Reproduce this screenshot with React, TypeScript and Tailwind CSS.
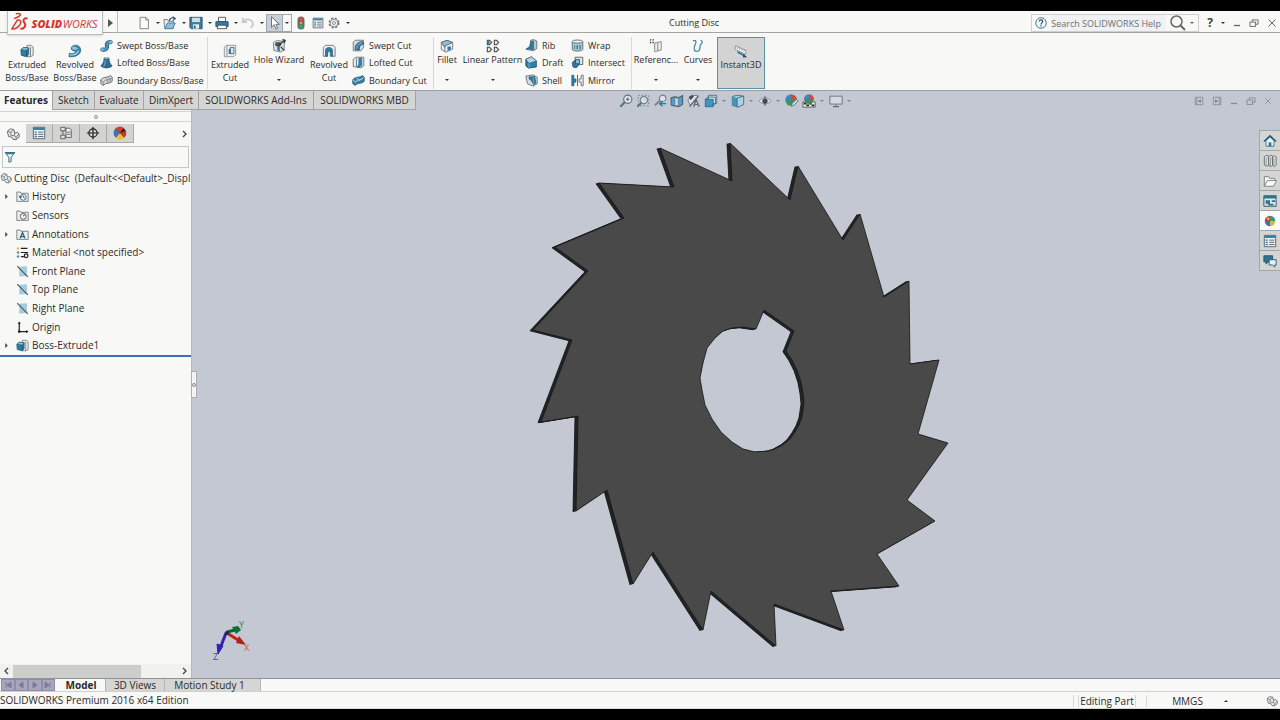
import { useState, type ReactNode } from "react";

const INK = "#454a4e";
const BLUE = "#2e7ea6";
const SKY = "#8cc0da";
const NAVY = "#1d4f6c";
const GREY = "#d9dcde";

/* All glyphs are drawn on a 16 x 16 grid. */
const ICONS: Record<string, ReactNode> = {
  newDoc: <path d="M3.5 1.5h6.500l3 3v10h-9.500zM10 1.500v3h3" fill="#fcfcfc" stroke="#777" />,
  open: (
    <>
      <path d="M1 4h4l1 2h6v8H2z" fill="#eee" stroke="#777" />
      <path d="M2 14.500 5 8h9l-3 6.500z" fill={SKY} stroke={BLUE} />
      <path d="M7 6c1-4 4-4.500 6-3.500M11 .8l3 2-3 2.500" fill="none" stroke={NAVY} strokeWidth="1.300" />
    </>
  ),
  save: (
    <>
      <path d="M1 1.500h14v13H2.500L1 13z" fill="#3d7d9c" stroke="#28536a" />
      <path d="M3.500 2h9v5h-9z" fill="#cfdfe7" />
      <path d="M4.500 9.500h7v5h-7z" fill="#e8eef0" />
      <path d="M5.500 11h2v3h-2z" fill="#28536a" />
    </>
  ),
  print: (
    <>
      <path d="M4 1.500h8v5H4z" fill="#fff" stroke={INK} />
      <path d="M1 6.500h14v5.500H1z" fill="#377b9d" stroke={NAVY} />
      <path d="M3.500 10.500h9l1 4h-11z" fill="#fff" stroke={INK} />
    </>
  ),
  undo: <path d="M2 2v5h5M2.500 6.500C5 3.500 9 3 12 5.500s2 6-1 8" fill="none" stroke="#c6c9ca" strokeWidth="2" />,
  cursor: <path d="M4 1v12l3-3 2 5 2-1-2-4.500h4z" fill="#fff" stroke="#59626a" />,
  traffic: (
    <>
      <rect x="4" y="0.500" width="8" height="15" rx="4" fill="#66696a" />
      <circle cx="8" cy="4" r="2.300" fill="#e8483c" />
      <circle cx="8" cy="8" r="1.500" fill="#c9b04a" />
      <circle cx="8" cy="12" r="2.300" fill="#2fae5a" />
    </>
  ),
  list: (
    <>
      <path d="M1.500 1.500h13v13h-13z" fill="#f2f4f4" stroke="#465b67" />
      <path d="M2 2h12v2.500H2z" fill={BLUE} />
      <path d="M3 7h2.500M3 9.500h2.500M3 12h2.500" stroke={BLUE} strokeWidth="1.500" />
      <path d="M7 7h6M7 9.500h6M7 12h6" stroke="#555" />
    </>
  ),
  gear: (
    <>
      <circle cx="8" cy="8" r="6.300" fill="none" stroke="#6b6f72" strokeWidth="2" strokeDasharray="3 2" />
      <circle cx="8" cy="8" r="5" fill="#f7f7f6" stroke="#6b6f72" />
      <circle cx="8" cy="8" r="2" fill="none" stroke="#6b6f72" />
    </>
  ),
  boss: (
    <>
      <path d="M8 1.500h4.500l2.500 2v9.500l-3 1.500H8z" fill="#eef0f1" stroke="#73797d" />
      <path d="M12 3.500v11" stroke="#73797d" />
      <path d="M1 6.500 4 4l6 .5v7.500L7.500 14.500 1.500 13z" fill={BLUE} stroke={NAVY} strokeWidth=".8" />
      <path d="M1 6.500 4 4l6 .5-2.500 3z" fill={SKY} stroke={NAVY} strokeWidth=".6" />
      <path d="M7.500 7.500v7" stroke={NAVY} />
    </>
  ),
  revolve: (
    <>
      <path d="M3.500 4.500C5 0 13.500 0 14.500 6c.7 6-6 9.500-13.500 8.500l.5-4c4 .8 7 0 7-1.500C8.500 7.500 3 8 3.500 4.500z" fill="#3987ae" stroke={NAVY} strokeWidth=".7" />
      <path d="M4 4.500c2-3 6-1.500 7.500 1C9.500 7.500 5 7 4 4.500z" fill={SKY} />
      <path d="M2 12.500c5 .5 9-1.500 10-5" fill="none" stroke="#b7dcec" strokeWidth="1.300" />
    </>
  ),
  sweep: (
    <>
      <path d="M3 13c5 1 6-2 5.500-5S10 3.500 13 4" fill="none" stroke={NAVY} strokeWidth="5" strokeLinecap="round" />
      <path d="M3 13c5 1 6-2 5.500-5S10 3.500 13 4" fill="none" stroke="#4594bb" strokeWidth="3.500" strokeLinecap="round" />
      <circle cx="13" cy="4" r="1.500" fill={SKY} />
      <circle cx="3" cy="13" r="1.500" fill={SKY} />
    </>
  ),
  loft: (
    <>
      <path d="M5 2.500h6c0 5 1 7 4 9.500-3 3.500-11 3.500-14 0 3-2.500 4-4.500 4-9.500z" fill="#2b6c92" stroke={NAVY} />
      <ellipse cx="8" cy="2.500" rx="3" ry="1.300" fill={SKY} />
      <path d="M6.500 5c0 4-.5 6-2 8" stroke={SKY} fill="none" />
    </>
  ),
  boundary: (
    <>
      <path d="M1 7c3-4 8-2 12-5l2 2v5c-4 4-8 1-11 5l-3-2z" fill={GREY} stroke="#555b5f" />
      <path d="M1 7.500 4 10c3-4 7-1.500 11-5.500M4 10v4M6.500 4.500l3 3.500v4M10 3.500l2.500 3v4" fill="none" stroke="#777c80" />
    </>
  ),
  cut: (
    <>
      <path d="M1.500 3.500 4 1.500h10.500v11L12 14.500H1.500z" fill="#eceeef" stroke="#8a8f93" />
      <path d="M4.500 2v12" stroke="#8a8f93" />
      <path d="M6.500 5.500h3v6h-3z" fill={BLUE} />
      <path d="M8.500 4h4v7h-4z" fill="#d5e7ef" stroke="#486979" />
    </>
  ),
  wizard: (
    <>
      <path d="M1.500 4 6 1.500 14 3v9.500L9.500 15 2 13z" fill={GREY} stroke="#7a8084" />
      <ellipse cx="7" cy="6" rx="3.500" ry="2.500" fill="#4f5659" />
      <path d="M6 8v5l3 1V8z" fill={BLUE} />
      <path d="m7 8 7-6.500M12 .5l3 1-1 3M10 9l4 4" stroke="#353b3f" strokeWidth="1.500" fill="none" />
    </>
  ),
  revCut: (
    <>
      <path d="M1.500 14V4L4 1.500h9L15 4v10h-4V9H6v5z" fill="#eceeef" stroke="#6d7478" />
      <path d="M4 14V7c0-4 8-4 8 0v7h-2.500V8h-3v6z" fill={BLUE} stroke={NAVY} strokeWidth=".7" />
    </>
  ),
  sweepCut: (
    <>
      <path d="M1.500 4 4 1.500h10v9L11 14.500H1.500z" fill={GREY} stroke="#5e666b" />
      <path d="M4 13C3.500 8 6 4 13 3l1.500 3C10 7 9 9 9 13.500z" fill={BLUE} stroke={NAVY} />
      <path d="M6 12c0-4 2-6.500 7-7.500" stroke={SKY} fill="none" strokeWidth="1.200" />
    </>
  ),
  loftCut: (
    <>
      <path d="M1.500 4 5 1.500h9.500V12L11 14.500 1.500 13z" fill="#e7eaeb" stroke="#5e666b" />
      <path d="M8 2h4v9.500l-3 3H5.500L8 10z" fill={BLUE} />
      <path d="M5.500 3v10M12 2v11" stroke="#596a73" />
    </>
  ),
  boundaryCut: (
    <>
      <path d="M1 7c3-4 8-2 12-5l2 2v5c-4 4-8 1-11 5l-3-2z" fill="#3a83aa" stroke={NAVY} />
      <path d="M1.500 7.500 4 10c3-4 7-1.500 10.500-5.500M6 5l3 3" fill="none" stroke="#b9dceb" strokeWidth="1.200" />
    </>
  ),
  fillet: (
    <>
      <path d="M1.500 4 8 1.500 14.500 4v7.500L7 15 1.500 12z" fill="#edf0f1" stroke="#6c7478" />
      <path d="M1.500 4 8 1.500 14.500 4 9 6.500c-2 0-3 1.500-3.500 3z" fill={SKY} stroke="#56646c" />
      <path d="M8.500 8.500h4V12l-4 1.500z" fill={BLUE} />
      <path d="M5.500 7v7.500" stroke="#6c7478" />
    </>
  ),
  pattern: (
    <>
      <path
        d="M1.500 1.500H4L6.500 4 4 6.500H1.500zM9.500 1.500H12L14.500 4 12 6.500H9.500zM1.500 9.500H4L6.500 12 4 14.500H1.500zM9.500 9.500H12l2.500 2.500-2.500 2.500H9.500z"
        fill="#e5e8e9"
        stroke="#41474b"
        strokeWidth="1.200"
      />
      <path d="M2 2h2v4H2z" fill={BLUE} />
    </>
  ),
  rib: (
    <>
      <path d="M7 1.500 11 .8l3.500 1.700V12L10 14.500l-9-2L6 10z" fill="#bfc8cd" stroke="#59666e" />
      <path d="M2 12c4-2 5-5 5.500-9l3-.5V13z" fill={BLUE} stroke={NAVY} strokeWidth=".7" />
    </>
  ),
  draft: (
    <>
      <path d="M1 4 8 1l6 5v7.500L4 15 1 12z" fill={BLUE} stroke={NAVY} />
      <path d="m1 4 7-3 6 5-9 3z" fill="#b6d5e3" stroke={NAVY} strokeWidth=".6" />
      <path d="M5 9v6" stroke={SKY} />
    </>
  ),
  shell: (
    <>
      <path d="M1 2.500 10 1l5 3v8l-5 3-7-3z" fill={GREY} stroke="#59666e" />
      <path d="m5 3.500 7-.5 1.500 8-3 2.500C9 10 8 7 5 6z" fill={BLUE} stroke={NAVY} strokeWidth=".7" />
      <path d="M10.500 4v9" stroke="#5caed2" />
    </>
  ),
  wrap: (
    <>
      <path d="M1.500 3v10c2 2.500 11 2.500 13 0V3z" fill="#b8c9d1" stroke="#4e5c64" />
      <ellipse cx="8" cy="3.200" rx="6.500" ry="2" fill="#edf1f2" stroke="#4e5c64" />
      <path d="M4 7.500h8v5H4z" fill={BLUE} />
      <path d="M6 7.500v5M9.500 7.500v5" stroke="#fff" />
    </>
  ),
  intersect: (
    <>
      <path d="M5 1.500h9.500v9H5z" fill="#dfe6e9" stroke="#48565e" />
      <path d="m1.500 8 4-3h4v6l-3 3.500-4-1z" fill={BLUE} stroke={NAVY} />
      <path d="M5.500 4.500h5v5h-5z" fill={SKY} stroke={NAVY} />
    </>
  ),
  mirror: (
    <>
      <path d="M1 1.500h2.500V6H6v4H3.500v4.500H1z" fill={BLUE} stroke={NAVY} strokeWidth=".8" />
      <path d="M15 1.500h-2.500V6H10v4h2.500v4.500H15z" fill="#f0f0f0" stroke="#59626a" />
      <path d="M8 1v14" stroke="#444" />
    </>
  ),
  refGeom: (
    <>
      <path d="M6.500 4.500 14 3v9.500l-7.500 2zM10 4v9.500" fill="#eceeef" stroke="#7b8185" />
      <path d="M1 1h1.500M4 1h1.500M1 4h1.500M4 4h1.500" stroke="#333" strokeWidth="1.500" />
    </>
  ),
  curves: <path d="M2 2c5-1 4 2 2.500 5S3 15 7.500 14 9 9 11 6.500 14 3 11 1.500" fill="none" stroke="#3e87a9" strokeWidth="1.400" />,
  instant: (
    <>
      <path d="m2 2 12 5.500-1 4L1 6z" fill="#fafafa" stroke="#8c9194" />
      <path d="m4.500 3.500-.7 2M7 4.500l-.7 2M9.500 5.500l-.7 2M12 6.700l-.7 2" stroke="#777" />
      <path d="m4 9 8 4.500" stroke={BLUE} strokeWidth="2" />
      <path d="m11 11.500 4 3.500-5 .5z" fill={NAVY} />
    </>
  ),
  zoomFit: (
    <>
      <circle cx="10" cy="6" r="4.700" fill="#dfe3ea" stroke="#63717b" strokeWidth="1.300" />
      <path d="m6.500 9.500-5 5" stroke="#4b7790" strokeWidth="2.500" />
      <path d="M8 6h4M10 4v4" stroke="#555" />
    </>
  ),
  zoomArea: (
    <>
      <path d="M2.500 1.500h12v12h-12z" fill="none" stroke="#777e86" strokeDasharray="2 2" />
      <circle cx="9" cy="7" r="4.200" fill="#d6dde6" stroke="#6c7983" strokeWidth="1.200" />
      <path d="m6 10-4.500 4.500" stroke="#4b7790" strokeWidth="2.300" />
    </>
  ),
  prevView: (
    <>
      <circle cx="11" cy="5" r="3.700" fill="#dfe3ea" stroke="#77818a" strokeWidth="1.300" />
      <path d="m8 7.500-6 5.500" stroke="#7d868d" strokeWidth="2.300" />
      <path d="M15 11H8m3-3-3.500 3 3.500 3" stroke={BLUE} fill="none" strokeWidth="1.600" />
    </>
  ),
  section: (
    <>
      <path d="M1 4.500 5 3l5 1 4.500-2.500V12L10 14.500 1.500 13z" fill="#6e8796" stroke="#3e515c" />
      <path d="M2 5.500h3v7H2zM10 5l3.500-1.500v8L10 13.500z" fill="#4ca0c9" />
      <path d="M6 5h3v8H6z" fill="#cad5dc" />
    </>
  ),
  annView: (
    <>
      <path d="M1 7 6 1.500 13 2 3.500 13z" fill="#e1e5e9" stroke="#6c7780" />
      <path d="m2 3 4-2 2 2-4 4z" fill="#454d54" />
      <path d="m3 14.500 10-12M7.500 14.500l3-8 3.500 8M8.500 12h5" fill="none" stroke="#5b6670" strokeWidth="1.400" />
    </>
  ),
  orient: (
    <>
      <path d="M5 1.500h9.500V11H5z" fill="#e2e8ed" stroke="#4b6b7e" />
      <path d="M1.500 6h9v8.500h-9z" fill="#3f95c2" stroke="#2a6788" />
      <path d="M1.500 6 5 3.500h8V11l-2.500 2" fill="none" stroke="#2a6788" />
    </>
  ),
  display: (
    <>
      <path d="m1.500 3 5-1.500 8 1V12L8 15l-6.500-2z" fill="#a9d2e6" stroke="#40687d" />
      <path d="M1.500 3 7 4.500V15l-5.500-2z" fill="#4794ba" />
      <path d="m7 4.500 7.500-2M7 4.500V15" stroke="#40687d" />
    </>
  ),
  eye: (
    <>
      <path d="M1 8c4-5 10-5 14 0-4 4.500-10 4.500-14 0z" fill="#d8dce2" stroke="#8a9096" />
      <circle cx="8" cy="8" r="3" fill="#45494e" />
      <path d="M8 2.500v11" stroke="#45494e" />
    </>
  ),
  ball: (
    <>
      <path d="M8 8V1a7 7 0 0 1 7 7z" fill="#3a9c52" />
      <path d="M8 8h7a7 7 0 0 1-7 7z" fill="#e3b23b" />
      <path d="M8 8v7a7 7 0 0 1-7-7z" fill="#2b76bd" />
      <path d="M8 8H1a7 7 0 0 1 7-7z" fill="#d63c30" />
      <circle cx="5.500" cy="5" r="1.700" fill="#fff" opacity=".6" />
    </>
  ),
  ballDark: (
    <>
      <circle cx="8" cy="8" r="7" fill="#222" />
      <path d="M8 8 2.500 3A7 7 0 0 1 12 2.200z" fill="#d63c30" />
      <path d="M8 8 2.500 3a7 7 0 0 0 .5 10z" fill="#3577bb" />
      <path d="m8 8-5 5a7 7 0 0 0 10 0z" fill="#e6bd35" />
      <path d="m8 8 5 5a7 7 0 0 0 1.500-7.500z" fill="#c0392b" />
    </>
  ),
  ballEdit: (
    <>
      <circle cx="7" cy="7" r="6.500" fill="#3a9460" />
      <path d="M7 7V.5A6.500 6.500 0 0 0 .5 7z" fill="#4384c1" />
      <path d="M7 7V.5A6.500 6.500 0 0 1 13.500 7z" fill="#d8473c" />
      <path d="m7 14 1-3 5-5 2 2-5 5z" fill="#cfe0e8" stroke="#4d7184" />
    </>
  ),
  scene: (
    <>
      <path d="M1 9h14v6H1z" fill="#eee" stroke="#555" />
      <path d="M2 10h3v2H2zM8 10h3v2H8zM5 12h3v2H5zM11 12h3v2h-3z" fill="#222" />
      <circle cx="8" cy="6" r="5.500" fill="#39905a" />
      <path d="M8 6V.5A5.500 5.500 0 0 0 2.500 6z" fill="#3f85c8" />
      <path d="M8 6V.5A5.500 5.500 0 0 1 13.500 6z" fill="#d8473c" />
    </>
  ),
  monitor: (
    <>
      <path d="M1 2.500h14v9H1z" fill="#d5dae1" stroke="#666c73" />
      <path d="M8 12v2.500M4.500 14.500h7" stroke="#666c73" strokeWidth="1.300" />
    </>
  ),
  part: (
    <>
      <path d="M1.500 5 5 2l4 1 1 4 3-1 2 2v3.500L11 14.500 8 14l-1.500-2.500L3 11z" fill="#e8eaea" stroke="#565c60" />
      <path d="m1.500 5 4 1L9 3M5.500 6v3.500l4 .5.500-3M9.500 10l2 1.500L15 8M11.500 11.500v3" fill="none" stroke="#6d7377" />
    </>
  ),
  config: (
    <>
      <path d="M2 1.500h5v4H2zM2 10.500h5v4H2zM4.500 5.500v5M7 12.500h2" fill="#e3e5e6" stroke="#555" />
      <path d="M8 2.500h4l2 2v8.500H8z" fill="#f1f2f2" stroke="#555" />
      <path d="M9 7h4M9 9.500h4" stroke="#555" />
    </>
  ),
  target: (
    <>
      <circle cx="8" cy="8" r="4.700" fill="none" stroke="#222" strokeWidth="1.400" />
      <path d="M8 1v14M1 8h14" stroke="#222" strokeWidth="1.400" />
    </>
  ),
  filter: (
    <>
      <path d="M1.500 2h13L9.500 8.500V14L6.500 15V8.500z" fill="#f3f7f8" stroke="#3b6577" strokeWidth="1.300" />
      <path d="M2 2h12l-1.500 2.200h-9z" fill="#327a9c" />
    </>
  ),
  history: (
    <>
      <path d="M1 2.500h4l1 1.500h9v10H1z" fill="#eceeee" stroke="#6a6f72" />
      <circle cx="9" cy="9" r="3.600" fill="#fff" stroke="#397692" strokeWidth="1.200" />
      <path d="M9 7v2l2 1M3.500 7l2 3 1.500-3" fill="none" stroke="#333" />
    </>
  ),
  sensors: (
    <>
      <path d="M1 2.500h4l1 1.500h9v10H1z" fill="#eceeee" stroke="#6a6f72" />
      <circle cx="9" cy="9" r="3.600" fill="#fff" stroke="#555" strokeWidth="1.200" />
      <path d="m9 9 1.500-2" stroke="#c3393b" strokeWidth="1.500" />
    </>
  ),
  annotations: (
    <>
      <path d="M1 2.500h4l1 1.500h9v10H1z" fill="#eceeee" stroke="#6a6f72" />
      <path d="M5 12.500 8 5.500l3 7M6 10.500h4" fill="none" stroke="#1f6079" strokeWidth="1.500" />
    </>
  ),
  material: (
    <>
      <circle cx="2.500" cy="3" r="1.500" fill="#e0c243" />
      <circle cx="2.500" cy="8" r="1.500" fill="#4b9a8a" />
      <circle cx="2.500" cy="13" r="1.500" fill="#4f8db0" />
      <path d="M6 3h8M6 8h9M6 13h5" stroke="#222" strokeWidth="1.500" />
      <circle cx="12.500" cy="12" r="2.200" fill="#f7f7f6" stroke="#222" strokeWidth="1.500" />
    </>
  ),
  plane: (
    <>
      <path d="m4 2 9.500-.5v12L4 14z" fill="#a8cbdc" />
      <path d="m1.500 1.500 13 13" stroke="#41545f" strokeWidth="1.300" />
    </>
  ),
  origin: (
    <>
      <path d="M4 2v11h10" fill="none" stroke="#222" strokeWidth="1.500" />
      <path d="m4 .5-2 3h4zM15.500 13l-3-2v4z" fill="#222" />
      <circle cx="4" cy="13" r="1.700" fill="#222" />
    </>
  ),
  home: (
    <>
      <path d="M3.500 7.500V14h9V7.500L8 3.500z" fill="#e9f1f4" stroke="#38718c" />
      <path d="M1 8.500 8 2l7 6.500" fill="none" stroke="#245a75" strokeWidth="1.600" />
      <path d="M6.500 9.500h3V14h-3z" fill="#2f7595" />
    </>
  ),
  library: (
    <>
      <path
        d="m1.500 3 3-1.500 2 1v10l-2 1.500-3-1.500zM6 3l3-1.500 2 1v10L9 14.500 6.500 13zM10.500 3.500l2.500-1.500 2 1v9.500L13 14.500 11 13z"
        fill="#e4e5e5"
        stroke="#64696c"
      />
      <path d="M3.500 4v9M8.500 4v10M12.500 4.500v9" stroke="#8c9194" />
    </>
  ),
  folder: (
    <>
      <path d="M1.500 14V3h5l1 2h6v3" fill="#f4f4f3" stroke="#73787b" />
      <path d="M1.500 14 5 7.500h10.500L12 14z" fill="#fbfbfa" stroke="#73787b" />
    </>
  ),
  palette: (
    <>
      <path d="M1 2h14v12H1z" fill="#dbe8ee" stroke="#254d61" />
      <path d="M1 2h14v3H1zM3 7h5v4H3zM10 7h4v2h-4zM6 11h6v2H6z" fill="#33708e" />
    </>
  ),
  forum: (
    <>
      <path d="M1 2h10v7H6l-2.500 2.500V9H1z" fill="#2d7596" stroke="#20556e" />
      <path d="M7 6.500h8v6h-1.500V15L11 12.500H7z" fill="#e5f0f4" stroke="#20556e" />
    </>
  ),
  paneLeft: (
    <>
      <path d="M2 2h12v12H2zM4.500 2v12" fill="none" stroke="#858b95" strokeWidth="1.400" />
      <path d="M11 5v6L6.500 8z" fill="#70767f" />
    </>
  ),
  paneRight: (
    <>
      <path d="M2 2h12v12H2zM11.500 2v12" fill="none" stroke="#858b95" strokeWidth="1.400" />
      <path d="M5 5v6l4.500-3z" fill="#70767f" />
    </>
  ),
  minimize: <path d="M2 13h12" stroke="currentColor" strokeWidth="2.600" />,
  restore: <path d="M1.500 6.500h9v7h-9zM5 6V3h9.500v7H11" fill="none" stroke="currentColor" strokeWidth="1.500" />,
  close: <path d="m2.500 2.500 11 11M13.500 2.500l-11 11" stroke="currentColor" strokeWidth="1.600" />,
  search: (
    <>
      <circle cx="6.500" cy="6.500" r="5.500" fill="none" stroke="#666" strokeWidth="1.500" />
      <path d="m10.500 10.500 4.500 4.500" stroke="#666" strokeWidth="2" />
    </>
  ),
  help: (
    <>
      <circle cx="8" cy="8" r="7" fill="#f5f9fa" stroke="#497487" strokeWidth="1.300" />
      <path d="M5.700 6c.3-3 4.800-2.500 4.500.2C10 8 8 7.800 8 10M8 11v1.800" fill="none" stroke="#255a72" strokeWidth="1.700" />
    </>
  ),
};

function Icon({ name, className = "size-3.5" }: { name: string; className?: string }) {
  return (
    <svg viewBox="0 0 16 16" fill="none" aria-hidden="true" className={`shrink-0 ${className}`}>
      {ICONS[name]}
    </svg>
  );
}

function Caret({ className = "text-[#333]" }: { className?: string }) {
  return (
    <svg viewBox="0 0 4 2" aria-hidden="true" className={`h-[2px] w-1 shrink-0 ${className}`}>
      <path d="M0 0h4L2 2z" fill="currentColor" />
    </svg>
  );
}

function QuickTool({ name, label }: { name: string; label: string }) {
  return (
    <div className="flex w-[26px] items-center justify-between pr-0.5">
      <button type="button" aria-label={label} className="flex w-4 justify-center">
        <Icon name={name} />
      </button>
      <button type="button" aria-label={`${label} options`}>
        <Caret />
      </button>
    </div>
  );
}

function TitleBar() {
  return (
    <header className="grid h-[22px] shrink-0 grid-cols-[1fr_auto_561px] border-b border-[#a5a5a5] bg-[#f8f8f7]">
      <div className="flex items-center">
        <div className="z-10 ml-[7px] flex h-6 w-24 items-center self-start border border-t-0 border-[#bdbdbd] bg-[#f8f8f8] shadow-sm">
          <svg viewBox="0 0 96 24" className="h-6 w-24" role="img" aria-label="SOLIDWORKS">
            <g fill="none" stroke="#d8352b" strokeWidth="1.500">
              <path d="M8 2.500c4-1 6 .5 3.500 2.500C10 6.200 8 7 6 7.500M4 18l5.500-9c4-.5 4.500 2 2.500 5-1.800 2.500-4.500 4.200-8 4z" />
              <path d="M20 7.500c-3-1-5 1-4 3s3 3 1 5.500c-1 1.500-3 2-4.500 1.500" strokeWidth="2" />
            </g>
            <g fontFamily="Open Sans, Liberation Sans, sans-serif" fontSize="11" fontStyle="italic" fill="#d8352b">
              <text x="24" y="17" fontWeight="800">SOLID</text>
              <text x="56" y="17">WORKS</text>
            </g>
          </svg>
        </div>
        <button type="button" aria-label="Expand menu" className="flex h-full w-[15px] items-center justify-center border-r border-[#bdbdbd]">
          <svg viewBox="0 0 5 8" className="h-2 w-[5px]"><path d="M0 0v8l5-4z" fill="#555" /></svg>
        </button>
        <div className="ml-[18px] flex items-center">
          <QuickTool name="newDoc" label="New" />
          <QuickTool name="open" label="Open" />
          <QuickTool name="save" label="Save" />
          <QuickTool name="print" label="Print" />
          <QuickTool name="undo" label="Undo" />
        </div>
        <div className="flex h-[18px] w-[26px] items-center border border-[#9daab1]">
          <button type="button" aria-label="Select" className="flex h-full w-4 items-center justify-center border-r border-[#9daab1] bg-[#c6d0d6]">
            <Icon name="cursor" />
          </button>
          <button type="button" aria-label="Select options" className="flex flex-1 justify-center">
            <Caret />
          </button>
        </div>
        <div className="ml-0.5 flex items-center gap-1">
          <button type="button" aria-label="Rebuild"><Icon name="traffic" className="size-3.5" /></button>
          <button type="button" aria-label="File properties"><Icon name="list" className="size-3" /></button>
          <button type="button" aria-label="Options"><Icon name="gear" className="size-3" /></button>
          <button type="button" aria-label="More options" className="ml-0.5"><Caret /></button>
        </div>
      </div>
      <h1 className="self-center text-[9px]">Cutting Disc</h1>
      <div className="flex items-center justify-end gap-2 pr-[3px] text-[#666]">
        <div className="flex h-[18px] w-[168px] items-center gap-1 border border-[#cfcfcf] pr-1 pl-[3px]">
          <Icon name="help" className="size-3" />
          <input
            type="text"
            aria-label="Search SOLIDWORKS Help"
            placeholder="Search SOLIDWORKS Help"
            className="h-4 min-w-0 flex-1 bg-[#f0f1f2] text-[9px] outline-none placeholder:text-[#6f6f6f]"
          />
          <button type="button" aria-label="Search"><Icon name="search" className="size-4" /></button>
          <Caret className="text-[#666]" />
        </div>
        <div className="flex items-center gap-2">
          <button type="button" className="text-[12px] font-bold text-[#444]">?</button>
          <Caret />
        </div>
        <button type="button" aria-label="Minimize"><Icon name="minimize" className="size-2" /></button>
        <button type="button" aria-label="Restore"><Icon name="restore" className="size-2.5" /></button>
        <button type="button" aria-label="Close"><Icon name="close" className="size-2.5" /></button>
      </div>
    </header>
  );
}

function TallTool({ name, lines, width, menu }: { name: string; lines: string[]; width: string; menu?: boolean }) {
  return (
    <button type="button" className={`flex h-full shrink-0 flex-col items-center ${menu ? "pt-[3px]" : "pt-2"} ${width}`}>
      <Icon name={name} />
      {lines.map((line) => (
        <span key={line} className="h-[13px] leading-[13px] whitespace-nowrap">{line}</span>
      ))}
      {menu && <span className="flex flex-1 items-center pt-1"><Caret /></span>}
    </button>
  );
}

function ToolStack({ items, width }: { items: [string, string][]; width: string }) {
  return (
    <div className={`grid h-[52px] shrink-0 grid-rows-3 ${width}`}>
      {items.map(([name, label]) => (
        <button key={label} type="button" className="flex items-center gap-1 whitespace-nowrap">
          <Icon name={name} className="size-[13px]" />
          {label}
        </button>
      ))}
    </div>
  );
}

const Divider = () => <div className="h-[52px] w-px shrink-0 bg-[#d9d9d8]" />;

function Ribbon() {
  return (
    <div className="flex h-[58px] shrink-0 items-center border-b border-[#9b9fa5] bg-[#f8f8f7] pt-[3px] pl-[3px] text-[9px]">
      <TallTool name="boss" lines={["Extruded", "Boss/Base"]} width="w-12" />
      <TallTool name="revolve" lines={["Revolved", "Boss/Base"]} width="w-12" />
      <ToolStack
        width="w-[108px] pl-px"
        items={[["sweep", "Swept Boss/Base"], ["loft", "Lofted Boss/Base"], ["boundary", "Boundary Boss/Base"]]}
      />
      <Divider />
      <TallTool name="cut" lines={["Extruded", "Cut"]} width="w-11" />
      <TallTool name="wizard" lines={["Hole Wizard"]} width="w-[54px]" menu />
      <TallTool name="revCut" lines={["Revolved", "Cut"]} width="w-[46px]" />
      <ToolStack
        width="w-[81px]"
        items={[["sweepCut", "Swept Cut"], ["loftCut", "Lofted Cut"], ["boundaryCut", "Boundary Cut"]]}
      />
      <Divider />
      <TallTool name="fillet" lines={["Fillet"]} width="w-[26px]" menu />
      <TallTool name="pattern" lines={["Linear Pattern"]} width="w-[65px]" menu />
      <ToolStack width="w-[46px]" items={[["rib", "Rib"], ["draft", "Draft"], ["shell", "Shell"]]} />
      <ToolStack width="w-[60px]" items={[["wrap", "Wrap"], ["intersect", "Intersect"], ["mirror", "Mirror"]]} />
      <Divider />
      <TallTool name="refGeom" lines={["Referenc..."]} width="w-12" menu />
      <TallTool name="curves" lines={["Curves"]} width="w-9" menu />
      <button type="button" aria-pressed="true" className="ml-px flex h-[52px] w-12 flex-col items-center border border-[#5b90a8] bg-[#d2d3d2] pt-1.5">
        <Icon name="instant" />
        <span className="leading-[14px]">Instant3D</span>
      </button>
    </div>
  );
}

const COMMAND_TABS: [string, string][] = [
  ["Features", "w-[53px]"],
  ["Sketch", "w-[42px]"],
  ["Evaluate", "w-[49px]"],
  ["DimXpert", "w-[55px]"],
  ["SOLIDWORKS Add-Ins", "w-[115px]"],
  ["SOLIDWORKS MBD", "w-[102px]"],
];

const VIEW_TOOLS: [string, string, boolean][] = [
  ["zoomFit", "Zoom to fit", false],
  ["zoomArea", "Zoom to area", false],
  ["prevView", "Previous view", false],
  ["section", "Section view", false],
  ["annView", "Dynamic annotation views", false],
  ["orient", "View orientation", true],
  ["display", "Display style", true],
  ["eye", "Hide/show items", true],
  ["ballEdit", "Edit appearance", false],
  ["scene", "Apply scene", true],
  ["monitor", "View settings", true],
];

function TabRow() {
  const [active, setActive] = useState("Features");
  return (
    <div className="flex h-[19px] shrink-0 items-center bg-[#c4c8d2]">
      <div role="tablist" className="flex h-full text-[10px]">
        {COMMAND_TABS.map(([label, width]) => (
          <button
            key={label}
            type="button"
            role="tab"
            aria-selected={active === label}
            onClick={() => setActive(label)}
            className={`shrink-0 border-r border-[#a3a3a3] whitespace-nowrap ${width} ${
              active === label ? "bg-[#f8f8f7] font-bold" : "border-b bg-[#d5d5d3]"
            }`}
          >
            {label}
          </button>
        ))}
      </div>
      <div className="flex flex-1 items-center justify-center pr-[140px]">
        {VIEW_TOOLS.map(([name, label, menu]) => (
          <button
            key={name}
            type="button"
            aria-label={label}
            className={`flex items-center gap-1 pl-0.5 ${menu ? "w-[27px]" : "w-[17px]"}`}
          >
            <Icon name={name} />
            {menu && <Caret className="text-[#7d828b]" />}
          </button>
        ))}
      </div>
      <div className="flex items-center gap-2 pr-2 text-[#858b95]">
        <button type="button" aria-label="Previous pane"><Icon name="paneLeft" className="size-2.5" /></button>
        <button type="button" aria-label="Next pane"><Icon name="paneRight" className="size-2.5" /></button>
        <button type="button" aria-label="Minimize document"><Icon name="minimize" className="size-2" /></button>
        <button type="button" aria-label="Restore document"><Icon name="restore" className="size-2.5" /></button>
        <button type="button" aria-label="Close document"><Icon name="close" className="size-2" /></button>
      </div>
    </div>
  );
}

const TREE: { icon: string; label: string; expandable?: boolean }[] = [
  { icon: "history", label: "History", expandable: true },
  { icon: "sensors", label: "Sensors" },
  { icon: "annotations", label: "Annotations", expandable: true },
  { icon: "material", label: "Material <not specified>" },
  { icon: "plane", label: "Front Plane" },
  { icon: "plane", label: "Top Plane" },
  { icon: "plane", label: "Right Plane" },
  { icon: "origin", label: "Origin" },
  { icon: "boss", label: "Boss-Extrude1", expandable: true },
];

const PANEL_TABS: [string, string][] = [
  ["list", "Property manager"],
  ["config", "Configuration manager"],
  ["target", "DimXpert manager"],
  ["ballDark", "Display manager"],
];

function Chevron({ flip }: { flip?: boolean }) {
  return (
    <svg viewBox="0 0 5 8" className="h-2 w-[5px]" aria-hidden="true">
      <path d={flip ? "M4 1 1 4l3 3" : "m1 1 3 3-3 3"} fill="none" stroke="#444" strokeWidth="1.300" />
    </svg>
  );
}

function FeaturePanel() {
  return (
    <aside className="relative flex w-48 shrink-0 flex-col border-r border-[#b4b8c0] bg-[#f8f8f7] text-[10px]">
      <div className="mt-px flex h-[11px] items-center justify-center border-y border-[#d3d3d2]">
        <span className="size-1 rounded-full border border-[#909090]" />
      </div>
      <div className="mt-0.5 flex h-[19px]">
        <button type="button" aria-label="Feature tree" className="flex w-[26px] items-center justify-center">
          <Icon name="part" />
        </button>
        {PANEL_TABS.map(([name, label]) => (
          <button
            key={name}
            type="button"
            aria-label={label}
            className="flex w-[27px] items-center justify-center border-r border-b border-[#a9a9a9] bg-[#d3d3d2]"
          >
            <Icon name={name} />
          </button>
        ))}
        <button type="button" aria-label="More tabs" className="ml-auto pr-1"><Chevron /></button>
      </div>
      <label className="mx-0.5 mt-[3px] flex h-[22px] items-center border border-[#c6c6c5] pl-px">
        <Icon name="filter" className="size-3" />
        <input type="text" aria-label="Filter tree" className="ml-1 min-w-0 flex-1 outline-none" />
      </label>
      <ul className="mt-px grid h-[188px] grid-rows-10 border-b-2 border-[#3f6fae]">
        <li className="flex items-center gap-0.5 whitespace-pre">
          <Icon name="part" className="size-3" />
          {"Cutting Disc  (Default<<Default>_Displ"}
        </li>
        {TREE.map(({ icon, label, expandable }) => (
          <li key={label} className="flex items-center pl-[5px]">
            <span className="w-[11px]">
              {expandable && (
                <svg viewBox="0 0 3 6" className="h-[5px] w-[3px]"><path d="M0 0v6l3-3z" fill="#444" /></svg>
              )}
            </span>
            <Icon name={icon} className="mr-[3px] size-[13px]" />
            {label}
          </li>
        ))}
      </ul>
      <div className="mt-auto flex h-3.5 items-center bg-[#f1f1f0] px-1">
        <Chevron flip />
        <div className="ml-1 h-[13px] w-32 bg-[#cdcdcc]" />
        <span className="ml-auto"><Chevron /></span>
      </div>
      <button
        type="button"
        aria-label="Collapse panel"
        className="absolute top-[261px] -right-1.5 z-10 flex h-[27px] w-1.5 items-center justify-center border border-[#a9adb5] bg-[#f3f3f3]"
      >
        <span className="size-1 rounded-full border border-[#888]" />
      </button>
    </aside>
  );
}

const BLADE =
  "M730 143 790 200 798 166 843 240 860 214 884 297 909 281 910 364 939 360 918 434 948 443 907 500 935 521 877 554 899 586 831 591 844 630 774 604 776 646 711 591 703 630 653 552 633 584 607 490 576 511 578 416 541 422 572 340 533 330 588 271 555 247 624 218 599 183 674 187 660 148 732 181z";
const BORE =
  "M764 310 794 331 786 351 792 360 797 370 801 382 803 393 804 403 802 417 799 425 795 432 790 439 784 444 775 449 768 451 755 452 743 449 732 442 721 432 712 419 705 405 702 390 700 378 703 363 707 348 715 338 723 331 732 328 742 327 756 329z";

const TASK_TABS: [string, string][] = [
  ["home", "Resources"],
  ["library", "Design library"],
  ["folder", "File explorer"],
  ["palette", "View palette"],
  ["ball", "Appearances"],
  ["list", "Custom properties"],
  ["forum", "Forum"],
];

function Viewport() {
  return (
    <main className="relative min-w-0 flex-1 bg-[#c4c8d2]">
      <svg viewBox="192 110 1088 568" className="size-full" role="img" aria-label="Cutting disc model">
        {[3, 2, 1].map((depth) => (
          <path
            key={depth}
            d={`${BLADE}${BORE}`}
            transform={`translate(${-depth} ${depth / 4})`}
            fill="#232526"
            fillRule="evenodd"
            stroke={depth === 3 ? "#0c0d0e" : "#232526"}
            strokeWidth=".8"
          />
        ))}
        <path d={`${BLADE}${BORE}`} fill="#494949" fillRule="evenodd" stroke="#151617" strokeWidth=".8" />
        <path d="m227 632 8-2" stroke="#156032" strokeWidth="3" />
        <path d="m232 627 6-1 3 4-5 4z" fill="#156b35" />
        <path d="m227 633 11 7" stroke="#c6210f" strokeWidth="3" />
        <path d="m239 636 7 9-10-2z" fill="#b51e10" />
        <path d="m226 633-5 13" stroke="#3423a8" strokeWidth="3" />
        <path d="m217 644 6 2-5 8z" fill="#3423a8" stroke="#3423a8" />
        <circle cx="227" cy="633" r="2" fill="#1c2a33" />
        <g fontFamily="Open Sans, Liberation Sans, sans-serif" fontSize="9">
          <text x="239" y="628" fill="#2f8a55">Y</text>
          <text x="244" y="651" fill="#e2524c">X</text>
          <text x="213" y="660" fill="#4a3fc4">Z</text>
        </g>
      </svg>
      <nav className="absolute top-5 right-0 w-[21px] border-t border-l border-[#a3a6ab]">
        {TASK_TABS.map(([name, label]) => (
          <button
            key={name}
            type="button"
            aria-label={label}
            className={`flex h-5 w-full items-center justify-center border-b border-[#a3a6ab] ${
              name === "ball" ? "bg-[#fafafa]" : "bg-[#d5d5d4]"
            }`}
          >
            <Icon name={name} className={name === "ball" ? "size-3" : "size-3.5"} />
          </button>
        ))}
      </nav>
    </main>
  );
}

const NAV_PATHS = ["M3 2v6M8 2v6L4 5z", "M7 2v6L3 5z", "M3 2v6l4-3z", "M7 2v6M2 2v6l4-3z"];

function Footer() {
  return (
    <footer className="shrink-0 bg-[#f8f8f7] text-[10px]">
      <div className="flex h-3.5 items-stretch border-t border-b border-t-[#8d939e] border-b-[#d0d0cf]">
        <div className="ml-px flex w-[54px] bg-[#a8a6bd]">
          {NAV_PATHS.map((d) => (
            <button key={d} type="button" aria-label="Scroll tabs" className="flex flex-1 items-center justify-center border border-[#8e8ca6]">
              <svg viewBox="0 0 10 10" className="size-2.5"><path d={d} fill="#7d7b96" stroke="#7d7b96" /></svg>
            </button>
          ))}
        </div>
        <button type="button" className="w-[50px] pl-0.5 leading-3 font-bold">Model</button>
        <button type="button" className="w-[60px] border-x border-[#b5b5b4] bg-[#d5d5d3] leading-3">3D Views</button>
        <button type="button" className="w-24 border-r border-[#b5b5b4] bg-[#d5d5d3] pr-1.5 leading-3">Motion Study 1</button>
      </div>
      <div className="flex h-[17px] items-center border-b border-[#d8d8d7] pt-px">
        <span className="flex-1">SOLIDWORKS Premium 2016 x64 Edition</span>
        <span className="mr-1 h-3 w-px bg-[#d8d8d7]" />
        <span className="w-[58px] border-x border-[#d8d8d7] text-center leading-3">Editing Part</span>
        <span className="ml-2.5 w-[82px] border-l border-[#d8d8d7] text-center leading-3">MMGS</span>
        <button type="button" aria-label="Unit system" className="-ml-1 rotate-180"><Caret /></button>
        <span className="w-[52px] pr-0.5"><Icon name="part" className="ml-auto size-3" /></span>
      </div>
    </footer>
  );
}

export default function App() {
  return (
    <div className="flex h-screen flex-col overflow-hidden bg-black py-[11px] font-['Open_Sans','Noto_Sans',sans-serif] text-[#2b2b2b]">
      <TitleBar />
      <Ribbon />
      <TabRow />
      <div className="flex min-h-0 flex-1">
        <FeaturePanel />
        <Viewport />
      </div>
      <Footer />
    </div>
  );
}
